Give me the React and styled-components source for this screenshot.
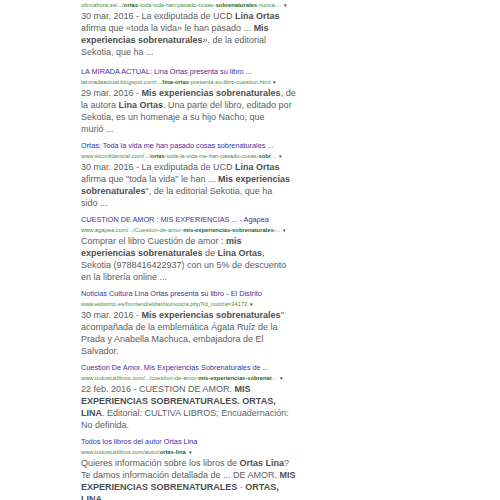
import React from "react";
import styled, { createGlobalStyle } from "styled-components";

const results = [
  {
    url: "ultimahora.es/.../**ortas**-toda-vida-han-pasado-cosas-**sobrenaturales**-nunca-...",
    snippet:
      "30 mar. 2016 - La exdiputada de UCD **Lina Ortas**\nafirma que «toda la vida» le han pasado ... **Mis**\n**experiencias sobrenaturales**», de la editorial\nSekotia, que ha ...",
  },
  {
    title: "LA MIRADA ACTUAL: Lina Ortas presenta su libro ...",
    url: "lamiradaactual.blogspot.com/.../**lina-ortas**-presenta-su-libro-cuestion.html",
    snippet:
      "29 mar. 2016 - **Mis experiencias sobrenaturales**, de\nla autora **Lina Ortas**. Una parte del libro, editado por\nSekotia, es un homenaje a su hijo Nacho, que\nmurió ...",
  },
  {
    title: "Ortas: Toda la vida me han pasado cosas sobrenaturales ...",
    url: "www.elconfidencial.com/.../**ortas**-toda-la-vida-me-han-pasado-cosas-**sobr**...",
    snippet:
      '30 mar. 2016 - La exdiputada de UCD **Lina Ortas**\nafirma que "toda la vida" le han ... **Mis experiencias**\n**sobrenaturales**", de la editorial Sekotia, que ha\nsido ...',
  },
  {
    title: "CUESTION DE AMOR : MIS EXPERIENCIAS ... - Agapea",
    url: "www.agapea.com/.../Cuestion-de-amor-**mis-experiencias-sobrenaturales-**...",
    snippet:
      "Comprar el libro Cuestión de amor : **mis**\n**experiencias sobrenaturales** de **Lina Ortas**,\nSekotia (9788416422937) con un 5% de descuento\nen la librería online ...",
  },
  {
    title: "Noticias Cultura Lina Ortas presenta su libro - El Distrito",
    url: "www.eldistrito.es/frontend/eldistrito/noticia.php?id_noticia=34172",
    snippet:
      '30 mar. 2016 - **Mis experiencias sobrenaturales**"\nacompañada de la emblemática Ágata Ruíz de la\nPrada y Anabella Machuca, embajadora de El\nSalvador.',
  },
  {
    title: "Cuestion De Amor. Mis Experiencias Sobrenaturales de ...",
    url: "www.todostuslibros.com/.../cuestion-de-amor-**mis-experiencias-sobrenat**...",
    snippet:
      "22 feb. 2016 - CUESTION DE AMOR. **MIS**\n**EXPERIENCIAS SOBRENATURALES. ORTAS,**\n**LINA**. Editorial: CULTIVA LIBROS; Encuadernación:\nNo definida.",
  },
  {
    title: "Todos los libros del autor Ortas Lina",
    url: "www.todostuslibros.com/autor/**ortas-lina**",
    snippet:
      "Quieres información sobre los libros de **Ortas Lina**?\nTe damos información detallada de ... DE AMOR. **MIS**\n**EXPERIENCIAS SOBRENATURALES** · **ORTAS,**\n**LINA**.",
  },
];

// "**x**" marks bold parts
function renderMarked(text) {
  return text.split("**").map((part, i) =>
    i % 2 === 1 ? <b key={i}>{part}</b> : <span key={i}>{part}</span>
  );
}

function App() {
  return (
    <>
      <GlobalStyle />
      <Page>
        {results.map((r, index) => (
          <Result key={index} first={index === 0}>
            {r.title && <Title>{r.title}</Title>}
            <Url>
              {renderMarked(r.url)}
              <Caret>▾</Caret>
            </Url>
            <Snippet>
              {r.snippet.split("\n").map((line, i) => (
                <Line key={i}>{renderMarked(line)}</Line>
              ))}
            </Snippet>
          </Result>
        ))}
      </Page>
    </>
  );
}

export default App;

const GlobalStyle = createGlobalStyle`
  html, body {
    margin: 0;
    padding: 0;
    background: #ffffff;
  }
  body {
    font-family: "Liberation Sans", Arial, sans-serif;
  }
`;

const Page = styled.div`
  width: 500px;
  height: 500px;
  overflow: hidden;
  box-sizing: border-box;
  padding: 0 0 0 81px;
`;

const Result = styled.div`
  margin-bottom: ${(props) => (props.first ? "9px" : "6px")};
  display: flex;
  flex-direction: column;
`;

const Title = styled.div`
  font-size: 7.3px;
  line-height: 10px;
  height: 10px;
  color: #3b33a3;
  white-space: nowrap;
`;

const Url = styled.div`
  font-size: 5.8px;
  line-height: 10px;
  height: 10px;
  color: #3f8f3f;
  white-space: nowrap;

  b {
    color: #1c6a1c;
  }
`;

const Caret = styled.span`
  margin-left: 3px;
  font-size: 5px;
  color: #333;
`;

const Snippet = styled.div`
  font-size: 9px;
  line-height: 12px;
  color: #5e5e5e;

  b {
    color: #4e4e4e;
  }
`;

const Line = styled.div`
  white-space: nowrap;
`;
